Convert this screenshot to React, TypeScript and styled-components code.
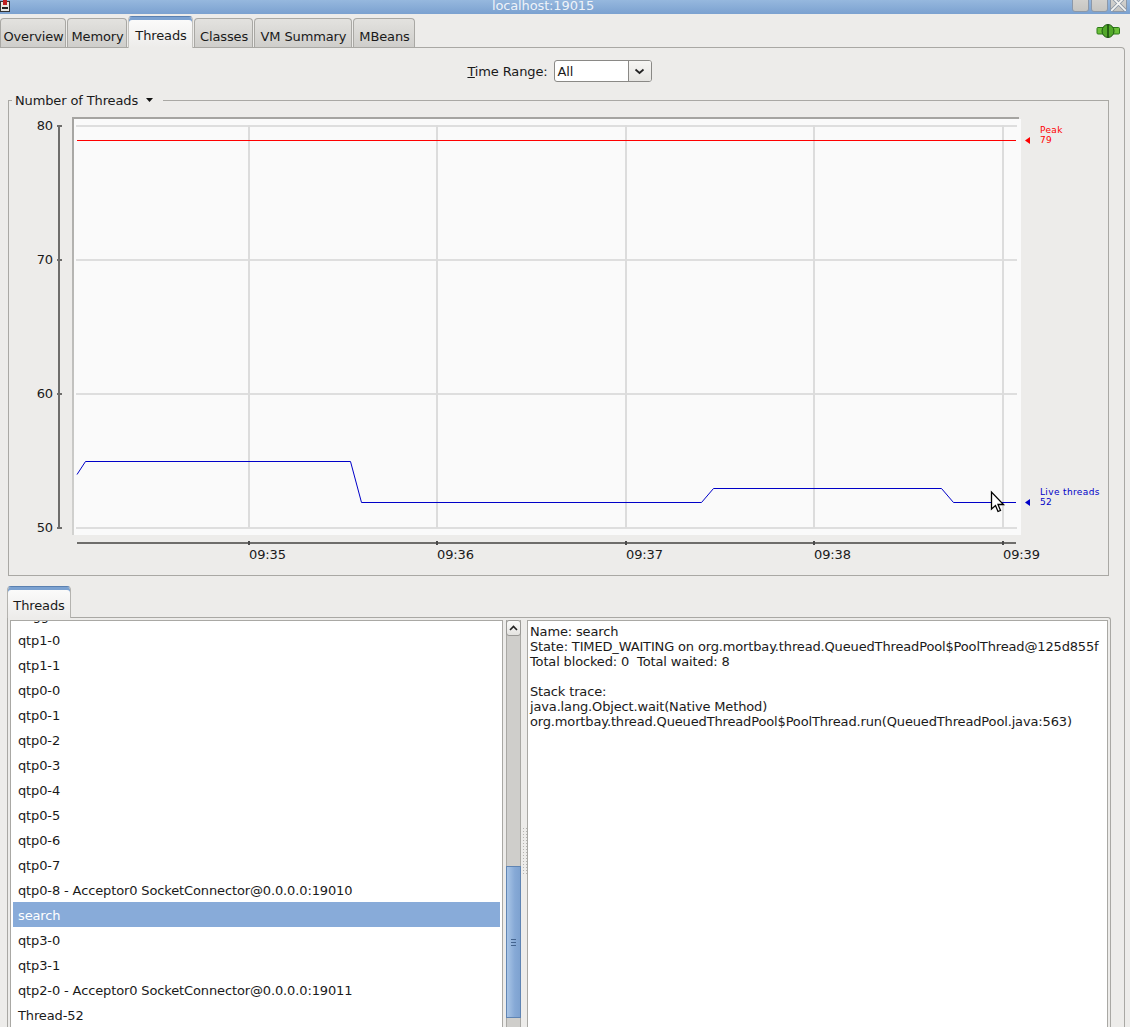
import React from "react";
import styled, { createGlobalStyle } from "styled-components";

const Global = createGlobalStyle`
  html, body { margin: 0; padding: 0; height: 1027px; overflow: hidden; background: #edecea; }
  #root { height: 1027px; }
  * { box-sizing: border-box; }
`;

const Win = styled.div`
  width: 1130px; height: 1027px; overflow: hidden; display: flex; flex-direction: column;
  background: #edecea; color: #1a1a1a;
  font: 13px/15px "DejaVu Sans", sans-serif; letter-spacing: -0.13px;
`;
const TitleBar = styled.div`
  height: 14px; flex: none; display: flex; align-items: flex-end; justify-content: center;
  position: relative; overflow: hidden;
  background: linear-gradient(#96b8de, #7ba1d0);
`;
const TitleText = styled.span`
  color: #eef3f9; line-height: 15px; margin-bottom: 1px; margin-right: 44px;
`;
const WinButtons = styled.div`
  position: absolute; right: 3px; top: -5px; display: flex; gap: 2px;
`;
const WinBtn = styled.div`
  width: 17px; height: 17px; border: 1px solid #8c98a8; border-radius: 3px;
  background: linear-gradient(#d6d5d2, #c6c5c1); display: flex;
`;
const AppIcon = styled.svg`
  position: absolute; left: 0; top: 0;
`;
const TabStrip = styled.div`
  height: 33px; flex: none; display: flex; align-items: flex-end;
  position: relative;
`;
const Tab = styled.div<{ $active?: boolean; $w: number }>`
  height: ${p => (p.$active ? 32 : 29)}px; margin-bottom: ${p => (p.$active ? -1 : 0)}px;
  width: ${p => p.$w}px; margin-right: 1px; flex: none; text-align: center;
  padding: ${p => (p.$active ? 11 : 10)}px 0 0 1px;
  border: 1px solid ${p => (p.$active ? "#c4c3bf" : "#a9a8a4")}; border-bottom: none;
  border-top-color: ${p => (p.$active ? "#5a80b0" : "#a9a8a4")};
  box-shadow: ${p => (p.$active ? "inset 0 3px 0 #7ba1d0" : "none")};
  border-radius: 4px 4px 0 0; position: relative; z-index: ${p => (p.$active ? 2 : 1)};
  background: ${p => (p.$active ? "linear-gradient(#fcfcfc, #edecea)" : "linear-gradient(#e3e2df, #cfcecb)")};
`;
const ConnIcon = styled.svg`
  position: absolute; right: 10px; top: 9px;
`;
const MainPanel = styled.div`
  flex: none; height: 980px; width: 1125px; border-top: 1px solid #a9a8a4; border-right: 1px solid #a9a8a4;
  border-top-right-radius: 4px; display: flex; flex-direction: column; padding-left: 8px;
`;
const RangeRow = styled.div`
  height: 52px; flex: none; display: flex; justify-content: center; align-items: flex-start;
  gap: 6px; padding: 12px 13px 0 0;
`;
const RangeLabel = styled.span`
  line-height: 23px;
  u { text-decoration: underline; }
`;
const Combo = styled.div`
  width: 98px; height: 22px; display: flex; border: 1px solid #8a8986; border-radius: 3px; background: #fff;
`;
const ComboValue = styled.div`
  flex: 1; padding-left: 3px; line-height: 21px; border-right: 1px solid #8a8986;
`;
const ComboArrow = styled.div`
  width: 22px; display: flex; align-items: center; justify-content: center;
  background: linear-gradient(#f6f5f3, #e6e5e2); border-radius: 0 2px 2px 0;
`;
const ChartBox = styled.div`
  width: 1101px; height: 476px; flex: none; position: relative;
  border: 1px solid #a9a8a4;
`;
const ChartTitle = styled.div`
  position: absolute; left: 3px; top: -9px; padding: 0 10px 0 3px; height: 16px; background: #edecea;
  display: flex; align-items: center; gap: 8px; line-height: 15px;
`;
const ChartSvg = styled.svg`
  display: block; font: 13px "DejaVu Sans", sans-serif;
`;
const Small = styled.text`
  font: 9px "DejaVu Sans", sans-serif; letter-spacing: 0.36px;
`;
const BottomTabs = styled.div`
  flex: none; margin-top: 10px; margin-left: -1px; height: 31px; display: flex; align-items: flex-end;
`;
const BottomTab = styled.div`
  width: 64px; height: 32px; margin-bottom: -1px; text-align: center; padding-top: 11px;
  border: 1px solid #b4b3af; border-top-color: #5a80b0; border-bottom: none;
  box-shadow: inset 0 3px 0 #7ba1d0;
  border-radius: 4px 4px 0 0; background: linear-gradient(#fcfcfc, #edecea); position: relative; z-index: 2;
`;
const ThreadPanel = styled.div`
  flex: 1; min-height: 0; width: 1104px; margin-left: -1px; border: 1px solid #a9a8a4;
  border-bottom: none; border-top-right-radius: 3px; display: flex; padding: 2px 0 0 2px;
`;
const ListPane = styled.div`
  width: 493px; flex: none; background: #fff; border: 1px solid #a9a8a4; border-bottom: none; overflow: hidden;
  padding: 0 2px;
`;
const ListInner = styled.div`
  margin-top: -19px;
`;
const Row = styled.div<{ $sel?: boolean }>`
  height: 25px; line-height: 27px; padding-left: 5px; white-space: nowrap;
  background: ${p => (p.$sel ? "#88abd9" : "transparent")};
  color: ${p => (p.$sel ? "#fff" : "inherit")};
`;
const Scroll = styled.div`
  width: 15px; flex: none; margin-left: 3px; display: flex; flex-direction: column; align-items: stretch;
  background: #cfcecb; border-left: 1px solid #a9a8a4; border-right: 1px solid #a9a8a4;
`;
const ScrollUp = styled.div`
  height: 16px; flex: none; margin: 0 -1px; border: 1px solid #9a9996; border-radius: 3px;
  background: linear-gradient(#fbfbfa, #e4e3e0); display: flex; align-items: center; justify-content: center;
`;
const Thumb = styled.div`
  height: 152px; margin: 230px -1px 0; flex: none; border: 1px solid #5f84b3;
  background: linear-gradient(90deg, #a9c5e6, #86a9d6 60%, #7ea2d0);
  display: flex; flex-direction: column; gap: 2px; align-items: center; justify-content: center;
  span { display: block; width: 5px; height: 1px; background: #44648f; }
`;
const Split = styled.div`
  width: 6px; flex: none; position: relative;
`;
const Grip = styled.div`
  position: absolute; left: 1px; top: 207px; width: 5px; height: 47px;
  background-image: radial-gradient(#b4b3b0 0.8px, transparent 0.9px);
  background-size: 3px 3px;
`;
const Details = styled.pre`
  flex: none; width: 581px; margin: 0; background: #fff; border: 1px solid #a9a8a4; border-bottom: none;
  padding: 3px 0 0 2px; font: 13px/15px "DejaVu Sans", sans-serif; letter-spacing: -0.15px; overflow: hidden;
`;

const tabs: [string, number][] = [["Overview", 66], ["Memory", 60], ["Threads", 65], ["Classes", 59], ["VM Summary", 98], ["MBeans", 62]];
const threads = ["Logger", "qtp1-0", "qtp1-1", "qtp0-0", "qtp0-1", "qtp0-2", "qtp0-3", "qtp0-4", "qtp0-5", "qtp0-6", "qtp0-7",
  "qtp0-8 - Acceptor0 SocketConnector@0.0.0.0:19010", "search", "qtp3-0", "qtp3-1",
  "qtp2-0 - Acceptor0 SocketConnector@0.0.0.0:19011", "Thread-52", "Thread-53"];

const xTicks: [number, string][] = [[240, "09:35"], [428, "09:36"], [617, "09:37"], [805, "09:38"], [994, "09:39"]];
const yTicks: [number, string][] = [[25, "80"], [159, "70"], [293, "60"], [427, "50"]];

const details = `Name: search
State: TIMED_WAITING on org.mortbay.thread.QueuedThreadPool$PoolThread@125d855f
Total blocked: 0  Total waited: 8

Stack trace: 
java.lang.Object.wait(Native Method)
org.mortbay.thread.QueuedThreadPool$PoolThread.run(QueuedThreadPool.java:563)`;

function Chart() {
  // coordinates are relative to the chart box's inner corner at (9,101)
  return (
    <ChartSvg width={1099} height={474}>
      <defs>
        <linearGradient id="leftEdge" x1="0" y1="0" x2="0" y2="1">
          <stop offset="0" stopColor="#a5a4a1" />
          <stop offset="1" stopColor="#d2d2d0" />
        </linearGradient>
      </defs>
      <rect x={64} y={18} width={948} height={416} fill="#fafafa" />
      <rect x={63} y={16} width={947} height={2} fill="#a5a4a1" />
      <rect x={63} y={16} width={2} height={418} fill="url(#leftEdge)" />
      {yTicks.map(([y]) => <rect key={y} x={67} y={y - 1} width={941} height={2} fill="#dedede" />)}
      {xTicks.map(([x]) => <rect key={x} x={x - 1} y={24} width={2} height={403} fill="#dcdcdc" />)}
      <path d="M68 39.5H1007" stroke="#ff0000" strokeWidth={1} />
      <path d="M68 373.5L76.5 360.5H341.5L352.5 401.5H692.5L704.5 387.5H932.5L944.5 401.5H1007" stroke="#0000c8" strokeWidth={1} fill="none" />
      <rect x={49} y={25} width={2} height={402} fill="#6e6d6b" />
      {yTicks.map(([y, t]) => (
        <g key={t}>
          <rect x={48} y={y - 1} width={5} height={2} fill="#6e6d6b" />
          <text x={44} y={y + 4} textAnchor="end" fill="#1a1a1a">{t}</text>
        </g>
      ))}
      <rect x={68} y={441} width={939} height={2} fill="#6e6d6b" />
      {xTicks.map(([x, t]) => (
        <g key={t}>
          <rect x={x - 1} y={440} width={2} height={4} fill="#4a4a4a" />
          <text x={x} y={458} fill="#1a1a1a">{t}</text>
        </g>
      ))}
      <path d="M1016 39.5l5 -3.5v7z" fill="#ff0000" />
      <Small x={1031} y={32} fill="#ff0000">Peak</Small>
      <Small x={1031} y={42} fill="#ff0000">79</Small>
      <path d="M1016 401.5l5 -3.5v7z" fill="#0000c8" />
      <Small x={1031} y={394} fill="#0000c8">Live threads</Small>
      <Small x={1031} y={404} fill="#0000c8">52</Small>
      <path d="M982.5 391V408l4 -3.5 2.5 6 2.5 -1 -2.5 -6H994.5z" fill="#fff" stroke="#000" strokeWidth={1.3} />
    </ChartSvg>
  );
}

export default function App() {
  return (
    <Win>
      <Global />
      <TitleBar>
        <AppIcon width={11} height={12} viewBox="0 0 11 12">
          <rect x={0.5} y={1.5} width={9} height={10} fill="#e8e6e2" stroke="#333" />
          <rect x={3} y={0} width={4} height={5} fill="#c02020" />
          <path d="M2 8h6" stroke="#222" strokeWidth={2} />
        </AppIcon>
        <TitleText>localhost:19015</TitleText>
        <WinButtons>
          <WinBtn />
          <WinBtn />
          <WinBtn>
            <svg width={15} height={15} viewBox="0 0 15 15">
              <path d="M0 0L15 15M15 0L0 15" stroke="#8c98a8" strokeWidth={3.4} />
              <path d="M0 0L15 15M15 0L0 15" stroke="#f4f4f2" strokeWidth={1.8} />
            </svg>
          </WinBtn>
        </WinButtons>
      </TitleBar>
      <TabStrip>
        {tabs.map(([t, w]) => <Tab key={t} $w={w} $active={t === "Threads"}>{t}</Tab>)}
        <ConnIcon width={24} height={16} viewBox="0 0 24 16">
          <rect x={1} y={4.5} width={22.5} height={6.5} rx={1} fill="#6cc03a" stroke="#2c7a18" />
          <ellipse cx={12} cy={8} rx={6} ry={6.5} fill="#52a82a" stroke="#1f5a12" />
          <path d="M12 1.5V14.5" stroke="#174a0c" strokeWidth={1.5} />
        </ConnIcon>
      </TabStrip>
      <MainPanel>
        <RangeRow>
          <RangeLabel><u>T</u>ime Range:</RangeLabel>
          <Combo>
            <ComboValue>All</ComboValue>
            <ComboArrow>
              <svg width={11} height={7} viewBox="0 0 11 7">
                <path d="M1.5 1.5L5.5 5L9.5 1.5" stroke="#222" strokeWidth={1.7} fill="none" />
              </svg>
            </ComboArrow>
          </Combo>
        </RangeRow>
        <ChartBox>
          <ChartTitle>
            Number of Threads
            <svg width={7} height={4} viewBox="0 0 7 4"><path d="M0 0H7L3.5 4z" fill="#111" /></svg>
          </ChartTitle>
          <Chart />
        </ChartBox>
        <BottomTabs><BottomTab>Threads</BottomTab></BottomTabs>
        <ThreadPanel>
          <ListPane>
            <ListInner>
              {threads.map(t => <Row key={t} $sel={t === "search"}>{t}</Row>)}
            </ListInner>
          </ListPane>
          <Scroll>
            <ScrollUp>
              <svg width={9} height={6} viewBox="0 0 9 6"><path d="M1 5L4.5 1.5L8 5" stroke="#222" strokeWidth={1.6} fill="none" /></svg>
            </ScrollUp>
            <Thumb><span /><span /><span /></Thumb>
          </Scroll>
          <Split><Grip /></Split>
          <Details>{details}</Details>
        </ThreadPanel>
      </MainPanel>
    </Win>
  );
}
